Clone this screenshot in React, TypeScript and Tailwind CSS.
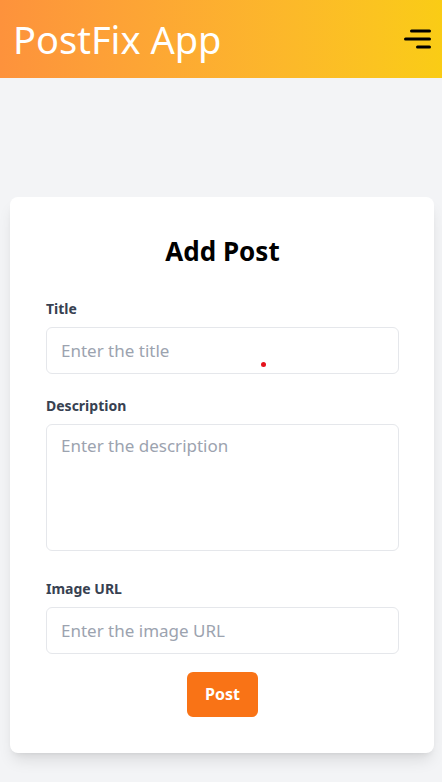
import React from 'react';

const MenuIcon: React.FC = () => (
  <svg width="34" height="28" viewBox="0 0 34 28" fill="none" stroke="#000" strokeWidth="3" strokeLinecap="round">
    <line x1="11.5" y1="6" x2="29.5" y2="6" />
    <line x1="5.5" y1="14" x2="29.5" y2="14" />
    <line x1="17.5" y1="22" x2="29.5" y2="22" />
  </svg>
);

const App: React.FC = () => {
  return (
    <div className="relative min-h-screen bg-[#f3f4f6]" style={{ fontFamily: '"Noto Sans", "Open Sans", sans-serif' }}>
      <header className="h-[78px] flex items-center justify-between pl-[13px] pr-2 bg-linear-to-r from-[#fd923c] to-[#facc15]">
        <h1 className="text-[38px] leading-none text-white">PostFix App</h1>
        <button type="button" aria-label="Menu">
          <MenuIcon />
        </button>
      </header>

      <main className="pl-[10px] pr-[8px] pt-[119px] pb-[30px]">
        <form className="bg-white rounded-lg shadow-lg pl-9 pr-[35px] pt-9 pb-9">
          <h2 className="text-center text-[26px] font-bold text-black leading-9 mb-[30px]">Add Post</h2>

          <div className="mb-[22px]">
            <label htmlFor="title" className="block text-sm font-bold text-[#374151] mb-2">Title</label>
            <input
              id="title"
              type="text"
              placeholder="Enter the title"
              className="block w-full border border-[#e5e7eb] rounded-md px-[14px] py-[10px] text-[17px] leading-[25px] placeholder:text-[#9ca3af] outline-none"
            />
          </div>

          <div className="mb-[28px]">
            <label htmlFor="description" className="block text-sm font-bold text-[#374151] mb-2">Description</label>
            <textarea
              id="description"
              placeholder="Enter the description"
              className="block w-full h-[127px] resize-none border border-[#e5e7eb] rounded-md px-[14px] py-2 text-[17px] leading-[25px] placeholder:text-[#9ca3af] outline-none"
            />
          </div>

          <div className="mb-[18px]">
            <label htmlFor="image" className="block text-sm font-bold text-[#374151] mb-2">Image URL</label>
            <input
              id="image"
              type="text"
              placeholder="Enter the image URL"
              className="block w-full border border-[#e5e7eb] rounded-md px-[14px] py-[10px] text-[17px] leading-[25px] placeholder:text-[#9ca3af] outline-none"
            />
          </div>

          <div className="flex justify-center">
            <button type="submit" className="bg-[#f97316] text-white font-bold text-base leading-[25px] px-[18px] py-[10px] rounded-md">
              Post
            </button>
          </div>
        </form>
      </main>

      <span className="absolute left-[261px] top-[362px] w-[5px] h-[5px] rounded-full bg-[#e5121b]" />
    </div>
  );
};

export default App;
